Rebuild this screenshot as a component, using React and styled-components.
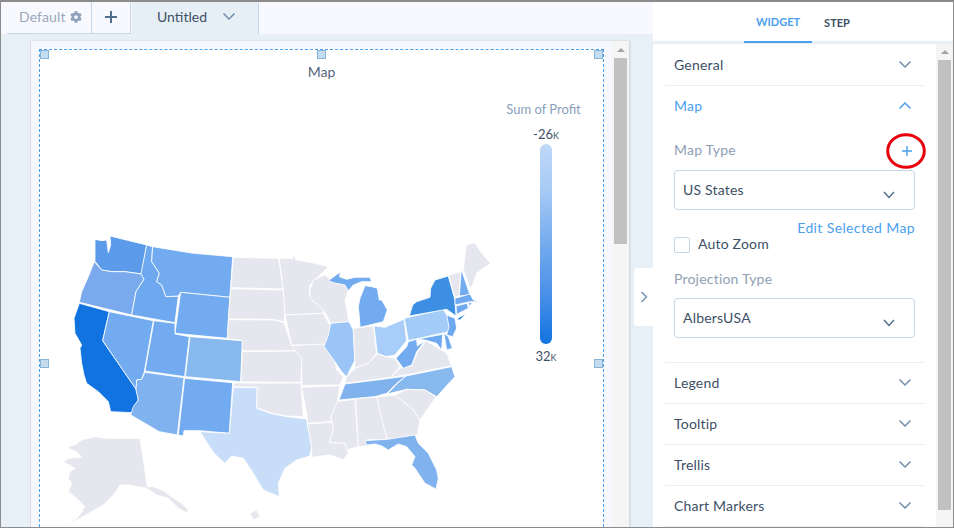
import React from 'react';
import styled, { createGlobalStyle } from 'styled-components';
import { FaCog } from 'react-icons/fa';

const GlobalStyle = createGlobalStyle`
  html, body { margin: 0; padding: 0; }
  body { font-family: "Lato", "Open Sans", sans-serif; background: #fff; }
`;

const Frame = styled.div`
  box-sizing: border-box;
  width: 954px;
  height: 528px;
  display: flex;
  overflow: hidden;
  border: 1px solid #8c8c8c;
  border-top-width: 2px;
`;

const Editor = styled.div`
  width: 652px;
  display: flex;
  flex-direction: column;
  background: #e8f0f7;
  position: relative;
`;

const TabBar = styled.div`
  height: 32px;
  flex: none;
  display: flex;
  background: #f7f9fe;
  padding-left: 6px;
`;

const PageTab = styled.div`
  display: flex;
  align-items: center;
  justify-content: ${p => (p.$center ? 'center' : 'flex-start')};
  gap: 4px;
  box-sizing: content-box;
  width: ${p => p.$w}px;
  padding-left: ${p => p.$pl || 0}px;
  padding-bottom: 2px;
  border-right: 1px solid #c5d6e6;
  border-bottom: 1px solid #c5d6e6;
  font-size: 14px;
  letter-spacing: 0.1px;
  color: #9aa9bb;
`;

const ActiveTab = styled.div`
  margin-left: 1px;
  width: 101px;
  padding-left: 25px;
  padding-bottom: 4px;
  display: flex;
  align-items: center;
  gap: 15px;
  background: #e7eff6;
  border-right: 1px solid #c5d6e6;
  font-size: 14px;
  color: #3d5066;
`;

const Sheet = styled.div`
  margin: 7px 0 0 30px;
  width: 598px;
  flex: 1;
  display: flex;
  background: #f7f8fe;
  box-shadow: 1px 0 2px #c9ced6, -1px 0 1px #dcdfe6;
  min-height: 0;
`;

const Widget = styled.div`
  position: relative;
  box-sizing: border-box;
  margin: 8px 0 0 8px;
  width: 565px;
  height: 628px;
  flex: none;
  background: #fff;
  border: 1px dashed #4a9fee;
  display: flex;
  flex-direction: column;
`;

const Handle = styled.span`
  position: absolute;
  left: ${p => p.$x}px;
  top: ${p => p.$y}px;
  box-sizing: border-box;
  width: 9px;
  height: 9px;
  background: #c4dcf0;
  border: 1px solid #86b3d6;
`;

const WidgetTitle = styled.div`
  margin-top: 13px;
  text-align: center;
  font-size: 14px;
  line-height: 17px;
  color: #54667a;
`;

const Chart = styled.div`
  display: flex;
  align-items: flex-start;
`;

const MapSvg = styled.svg`
  flex: none;
  width: 470px;
  height: 320px;
  margin-top: 128px;
  display: block;
`;

const Legend = styled.div`
  margin: 22px 0 0 -4px;
  width: 80px;
  display: flex;
  flex-direction: column;
  align-items: center;
`;

const LegendTitle = styled.div`
  font-size: 13px;
  line-height: 15px;
  margin-right: 5px;
  color: #8aa0bb;
  white-space: nowrap;
`;

const LegendValue = styled.div`
  font-size: 13px;
  line-height: 15px;
  margin-top: ${p => p.$mt || 0}px;
  color: #3d5066;
  font-variant: small-caps;
`;

const ColorBar = styled.div`
  width: 12px;
  height: 200px;
  margin: 2px 0 5px;
  border-radius: 6px;
  background: linear-gradient(#bfd8f8 0%, #a9cbf5 22%, #74abee 50%, #4a90e8 75%, #1173e0 100%);
`;

const ScrollTrack = styled.div`
  flex: none;
  width: ${p => p.$w}px;
  margin-left: ${p => p.$ml || 0}px;
  background: #f5f5f5;
  display: flex;
  flex-direction: column;
  align-items: flex-start;
`;

const ScrollArrow = styled.span`
  align-self: center;
  margin-top: ${p => p.$mt}px;
  width: 0;
  height: 0;
  border-left: 4px solid transparent;
  border-right: 4px solid transparent;
  border-bottom: 4px solid #a3a3a3;
`;

const ScrollThumb = styled.div`
  width: 13px;
  height: ${p => p.$h}px;
  margin-top: ${p => p.$mt}px;
  margin-left: ${p => p.$ml}px;
  background: #c1c1c1;
`;

const Collapse = styled.div`
  position: absolute;
  left: 633px;
  top: 266px;
  width: 19px;
  height: 58px;
  border-radius: 3px 0 0 3px;
  background: #fff;
  display: flex;
  align-items: center;
  justify-content: center;
`;

const Panel = styled.div`
  width: 300px;
  flex: none;
  display: flex;
  flex-direction: column;
  background: #fff;
  min-height: 0;
`;

const PanelTabs = styled.div`
  height: 39px;
  flex: none;
  display: flex;
  padding-left: 91px;
  border-bottom: 3px solid #e8f0f7;
  position: relative;
`;

const PanelTab = styled.div`
  box-sizing: border-box;
  height: 41px;
  padding: 0 12px;
  display: flex;
  align-items: center;
  font-size: 11px;
  font-weight: 700;
  color: ${p => (p.$active ? '#4a9fee' : '#3d5066')};
  border-bottom: ${p => (p.$active ? '2px solid #4a9fee' : '0')};
`;

const PanelBody = styled.div`
  flex: 1;
  display: flex;
  min-height: 0;
  overflow: hidden;
`;

const Sections = styled.div`
  margin-left: 12px;
  width: 259px;
  flex: none;
  position: relative;
  letter-spacing: 0.2px;
`;

const SectionRow = styled.div`
  box-sizing: border-box;
  height: ${p => p.$h || 41}px;
  padding: 0 12px ${p => (p.$h ? 0 : 2)}px 9px;
  display: flex;
  align-items: center;
  justify-content: space-between;
  border-bottom: ${p => (p.$open ? '0' : '1px solid #e8f0f7')};
  font-size: 14px;
  color: ${p => (p.$open ? '#4a9fee' : '#3d5066')};
`;

const MapBody = styled.div`
  box-sizing: border-box;
  height: 236px;
  padding: 0 9px;
  border-bottom: 1px solid #e8f0f7;
  display: flex;
  flex-direction: column;
`;

const FieldHead = styled.div`
  display: flex;
  justify-content: space-between;
  align-items: center;
  height: 17px;
  margin-top: ${p => p.$mt}px;
  font-size: 14px;
  color: #8fa0b5;
`;

const AddIcon = styled.svg`
  width: 10px;
  height: 10px;
  margin: 2px 3px 0 0;
`;

const Select = styled.div`
  box-sizing: border-box;
  width: 241px;
  height: 40px;
  margin-top: ${p => p.$mt}px;
  padding: 0 20px 0 8px;
  display: flex;
  justify-content: space-between;
  border: 1px solid #c5d6e6;
  border-radius: 4px;
  font-size: 14px;
  color: #3d5066;
  line-height: 37px;
`;

const SelectChevron = styled.svg`
  width: 12px;
  height: 8px;
  margin-top: 20px;
  margin-right: -1px;
`;

const EditLink = styled.div`
  margin-top: 9px;
  height: 17px;
  text-align: right;
  font-size: 14px;
  line-height: 17px;
  letter-spacing: 0.38px;
  color: #4a9fee;
`;

const CheckRow = styled.div`
  display: flex;
  align-items: center;
  gap: 8px;
  height: 16px;
  margin-top: 1px;
  font-size: 14px;
  color: #3d5066;
`;

const CheckBox = styled.span`
  box-sizing: border-box;
  width: 16px;
  height: 16px;
  border: 1px solid #c5d6e6;
  border-radius: 2px;
`;

const CheckLabel = styled.span`
  margin-bottom: 3px;
`;

const RedCircle = styled.svg`
  position: absolute;
  left: 221px;
  top: 89px;
  width: 40px;
  height: 36px;
`;

const Chevron = ({ up, color = '#6f8cab' }) => (
  <svg width="14" height="9" viewBox="0 0 14 9" fill="none">
    <path d={up ? 'M1.5 7.5 L7 2 L12.5 7.5' : 'M1.5 1.5 L7 7 L12.5 1.5'} stroke={color} strokeWidth="1.5" />
  </svg>
);

const GRAY = '#e6e7ee';

// traced from the reference, 3x pixels relative to (40,220)
const WEST = [
  ['#5b9bea', '165,58 185,62 200,60 205,98 212,75 210,48 320,75 305,162 255,155 215,155 185,150 170,130 165,125'],
  ['#7aa9ee', '163,125 185,150 215,155 255,155 305,162 312,178 288,215 275,285 118,247 125,215 145,170'],
  ['#1173e0', '118,250 208,275 188,362 290,510 295,540 278,578 212,575 205,545 175,515 140,490 132,465 125,430 120,385 125,375 105,340 102,295'],
  ['#6ea8ee', '320,75 338,80 335,125 358,160 350,185 365,195 378,230 415,228 405,308 275,285 288,215 312,178 303,162'],
  ['#72abef', '338,80 460,100 578,110 570,232 422,217 415,228 378,230 365,195 350,185 358,160 335,125'],
  ['#72abef', '422,217 570,232 562,355 405,340'],
  ['#72abef', '208,275 340,302 313,455 305,478 290,480 290,510 188,362'],
  ['#72abef', '342,302 405,310 405,342 448,350 434,470 315,453'],
  ['#88b9ee', '450,350 607,362 602,485 436,470'],
  ['#80b2ef', '315,457 432,473 412,645 358,635 272,585 280,560 295,540 288,510 290,480 305,478'],
  ['#72abef', '434,475 578,488 568,640 480,632 432,632 430,648 415,645'],
  ['#c8ddf8', '580,502 652,503 650,565 690,580 740,590 800,597 815,680 810,708 770,720 735,745 715,790 718,830 670,810 640,760 610,715 575,708 555,730 522,700 480,635 568,640'],
  [GRAY, '580,112 716,115 730,207 572,203'],
  [GRAY, '572,206 730,210 735,282 732,305 700,298 565,297'],
  [GRAY, '565,299 700,300 732,308 755,375 770,393 607,392 607,362 562,357'],
  [GRAY, '607,395 770,393 785,415 783,487 603,486'],
  [GRAY, '580,489 783,489 790,590 740,588 690,578 650,563 652,502 580,500'],
  [GRAY, '718,115 758,115 762,103 768,120 800,125 825,130 865,140 825,180 810,195 808,225 820,245 850,265 850,280 735,285 730,210'],
  [GRAY, '735,285 850,280 878,330 855,375 755,375'],
  [GRAY, '755,377 850,372 885,420 890,450 910,470 900,495 785,497 785,415'],
  [GRAY, '80,683 110,672 125,660 165,650 200,655 300,655 310,720 322,800 340,800 370,812 395,830 425,850 445,870 440,878 415,865 385,835 350,825 320,805 295,800 265,795 240,795 225,820 205,840 190,855 155,875 120,895 85,915 115,890 135,860 115,840 85,815 95,790 85,775 90,755 105,745 70,725 85,715 125,712 110,695'],
  [GRAY, '630,880 650,870 660,890 640,900'],
];

// same, relative to (300,220)
const EAST = [
  [GRAY, '40,180 75,165 100,188 135,195 145,212 135,240 147,305 92,310 70,270 30,235 30,210'],
  ['#72abef', '85,182 122,155 118,170 140,178 165,172 210,172 215,185 185,185 160,195 145,212 135,195 100,188'],
  ['#72abef', '175,260 180,235 195,197 215,200 232,205 238,240 245,240 262,270 250,305 180,322 178,290'],
  ['#9bc5f6', '92,310 147,305 160,330 165,420 140,470 125,455 105,425 72,380 85,345'],
  [GRAY, '160,325 220,318 230,400 205,430 165,445'],
  ['#a7cdf8', '222,318 255,322 312,298 320,362 285,405 258,410 232,400'],
  [GRAY, '140,470 165,445 205,430 232,402 258,410 285,415 300,440 272,472 135,490'],
  ['#80b2ee', '135,492 272,475 318,468 290,490 260,520 225,530 117,540'],
  ['#88b9ee', '318,468 455,440 465,470 410,530 375,510 320,508 262,522 290,492'],
  [GRAY, '272,472 300,445 335,437 352,398 378,362 440,400 455,437 318,465'],
  ['#72abef', '288,415 320,380 325,365 350,358 352,378 375,362 350,395 335,435 310,445'],
  ['#a3cdf8', '313,295 430,268 450,300 447,335 325,362'],
  ['#3d8fe3', '328,288 338,255 350,245 390,232 392,205 405,180 445,168 458,215 465,240 468,288 440,268'],
  ['#1f7de0', '468,298 500,280 480,300'],
  ['#6ea8ee', '440,285 465,295 470,325 458,350 440,345 447,320'],
  ['#6ea8ee', '432,340 445,350 457,385 440,390'],
  ['#6ea8ee', '350,358 428,343 425,390 410,370 375,360'],
  [GRAY, '445,165 482,155 478,225 465,232'],
  ['#72abef', '484,148 510,225 478,228'],
  [GRAY, '498,80 505,72 525,68 535,85 550,105 558,115 572,130 550,145 530,160 518,195 510,205 500,175 490,150'],
  ['#6ea8ee', '465,235 510,222 520,240 540,245 510,245 465,255'],
  ['#6ea8ee', '468,258 502,250 505,265 470,283'],
  ['#6ea8ee', '505,248 515,247 510,262'],
  [GRAY, '285,525 320,508 375,510 408,530 360,600 335,565'],
  [GRAY, '230,532 285,525 335,565 360,600 353,645 262,658 250,620'],
  [GRAY, '167,537 230,530 252,625 262,658 197,660 205,678 175,680'],
  [GRAY, '92,590 108,545 165,538 175,680 140,690 135,670 88,668 100,625'],
  [GRAY, '5,502 120,497 112,545 92,590 95,605 22,610 22,590'],
  [GRAY, '22,612 95,607 100,625 88,668 135,670 145,700 130,720 90,705 35,712 35,680'],
  ['#80b2ee', '195,662 262,658 345,645 355,670 385,700 410,750 415,775 408,808 395,800 375,790 345,745 335,735 345,710 320,680 295,672 265,690 245,678 225,672 200,675'],
];

const USMap = () => (
  <MapSvg viewBox="40 208 470 320">
    <g transform="translate(40 220) scale(0.3333)" stroke="#fff" strokeWidth="2.5" strokeLinejoin="round">
      {WEST.map(([fill, points]) => <polygon key={points} fill={fill} points={points} />)}
    </g>
    <g transform="translate(300 220) scale(0.3333)" stroke="#fff" strokeWidth="2.5" strokeLinejoin="round">
      {EAST.map(([fill, points]) => <polygon key={points} fill={fill} points={points} />)}
    </g>
  </MapSvg>
);

const collapsedAfter = ['Legend', 'Tooltip', 'Trellis', 'Chart Markers'];

const App = () => (
  <Frame>
    <GlobalStyle />
    <Editor>
      <TabBar>
        <PageTab $w={72} $pl={12}>Default <FaCog size={12} color="#8ea3bb" /></PageTab>
        <PageTab $w={38} $center>
          <svg width="12" height="12" viewBox="0 0 12 12"><path d="M6 0 V12 M0 6 H12" stroke="#4f6d8f" strokeWidth="2" /></svg>
        </PageTab>
        <ActiveTab>Untitled <Chevron /></ActiveTab>
      </TabBar>
      <Sheet>
        <Widget>
          <Handle $x={0} $y={0} />
          <Handle $x={277} $y={0} />
          <Handle $x={554} $y={0} />
          <Handle $x={0} $y={309} />
          <Handle $x={554} $y={309} />
          <WidgetTitle>Map</WidgetTitle>
          <Chart>
            <USMap />
            <Legend>
              <LegendTitle>Sum of Profit</LegendTitle>
              <LegendValue $mt={10}>-26k</LegendValue>
              <ColorBar />
              <LegendValue>32k</LegendValue>
            </Legend>
          </Chart>
        </Widget>
        <ScrollTrack $w={17} $ml={8}>
          <ScrollArrow $mt={7} />
          <ScrollThumb $h={186} $mt={6} $ml={2} />
        </ScrollTrack>
      </Sheet>
      <Collapse>
        <svg width="8" height="12" viewBox="0 0 8 12" fill="none"><path d="M1.5 1 L6.5 6 L1.5 11" stroke="#7593b3" strokeWidth="1.5" /></svg>
      </Collapse>
    </Editor>
    <Panel>
      <PanelTabs>
        <PanelTab $active>WIDGET</PanelTab>
        <PanelTab>STEP</PanelTab>
      </PanelTabs>
      <PanelBody>
        <Sections>
          <SectionRow $h={42}>General <Chevron /></SectionRow>
          <SectionRow $open>Map <Chevron up color="#4a9fee" /></SectionRow>
          <MapBody>
            <FieldHead $mt={14}>
              Map Type
              <AddIcon viewBox="0 0 10 10"><path d="M5 0 V10 M0 5 H10" stroke="#4a9fee" strokeWidth="1.4" /></AddIcon>
            </FieldHead>
            <Select $mt={12}>
              US States
              <SelectChevron viewBox="0 0 12 8" fill="none"><path d="M1 1 L6 6.5 L11 1" stroke="#54708f" strokeWidth="1.5" /></SelectChevron>
            </Select>
            <EditLink>Edit Selected Map</EditLink>
            <CheckRow><CheckBox /> <CheckLabel>Auto Zoom</CheckLabel></CheckRow>
            <FieldHead $mt={17}>Projection Type</FieldHead>
            <Select $mt={11}>
              AlbersUSA
              <SelectChevron viewBox="0 0 12 8" fill="none"><path d="M1 1 L6 6.5 L11 1" stroke="#54708f" strokeWidth="1.5" /></SelectChevron>
            </Select>
          </MapBody>
          {collapsedAfter.map(name => (
            <SectionRow key={name}>{name} <Chevron /></SectionRow>
          ))}
          <RedCircle viewBox="0 0 40 36" fill="none">
            <ellipse cx="20" cy="18" rx="18.3" ry="16.3" stroke="#e8000d" strokeWidth="3" />
          </RedCircle>
        </Sections>
        <ScrollTrack $w={18} $ml={12}>
          <ScrollArrow $mt={6} />
          <ScrollThumb $h={450} $mt={6} $ml={2} />
        </ScrollTrack>
      </PanelBody>
    </Panel>
  </Frame>
);

export default App;
